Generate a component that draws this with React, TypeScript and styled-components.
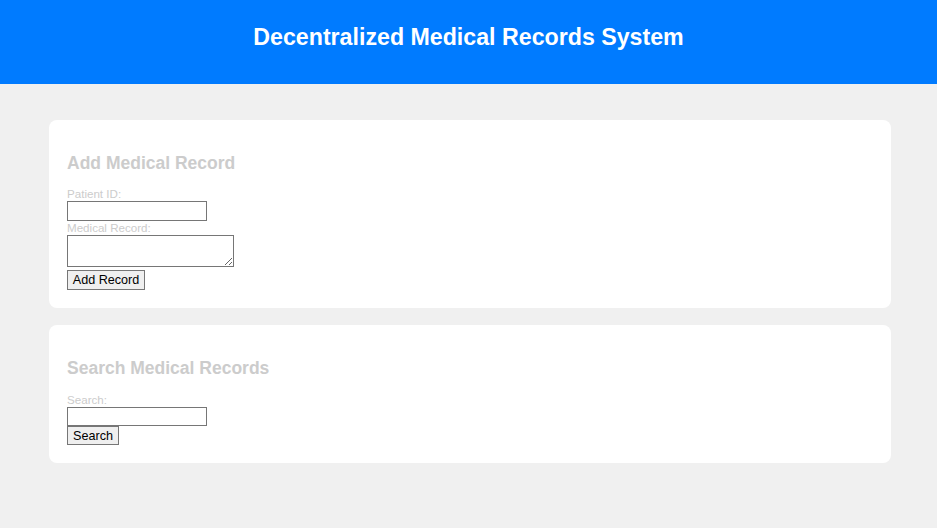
import React from "react";
import styled, { createGlobalStyle } from "styled-components";

const GlobalStyle = createGlobalStyle`
  html, body {
    margin: 0;
    padding: 0;
    background: #f0f0f0;
    font-family: "Liberation Sans", Arial, sans-serif;
  }
`;

const Header = styled.header`
  background: #007bff;
  height: 84px;
  box-sizing: border-box;
  padding-top: 23px;
`;

const Title = styled.h1`
  margin: 0;
  color: #ffffff;
  font-size: 23.2px;
  line-height: 28px;
  font-weight: bold;
  text-align: center;
`;

const Main = styled.main`
  display: flex;
  flex-direction: column;
  gap: 17px;
  padding: 36px 46px 0 49px;
`;

const Card = styled.section`
  background: #ffffff;
  border-radius: 8px;
  padding: 18px;
  display: flex;
  flex-direction: column;
  align-items: flex-start;
`;

const CardTitle = styled.h2<{ $after?: number }>`
  margin: 15px 0 ${(p) => p.$after ?? 13}px;
  color: #cccccc;
  font-size: 17.5px;
  line-height: 21px;
  font-weight: bold;
`;

const Label = styled.label`
  display: block;
  color: #cccccc;
  font-size: 11.6px;
  line-height: 14px;
`;

const TextInput = styled.input<{ $h?: number }>`
  box-sizing: border-box;
  width: 140px;
  height: ${(p) => p.$h ?? 20}px;
  margin: 0;
  padding: 1px 2px;
  border: 1px solid #767676;
  border-radius: 0;
  background: #fff;
  font-family: "Liberation Sans", Arial, sans-serif;
  font-size: 13px;
`;

const TextArea = styled.textarea`
  box-sizing: border-box;
  width: 167px;
  height: 32px;
  margin: 0 0 3px;
  padding: 2px;
  border: 1px solid #767676;
  border-radius: 0;
  background: #fff;
  font-family: "Liberation Mono", monospace;
  font-size: 13px;
  display: block;
`;

const Button = styled.button<{ $w: number; $h: number }>`
  box-sizing: border-box;
  width: ${(p) => p.$w}px;
  height: ${(p) => p.$h}px;
  margin: 0;
  padding: 0;
  border: 1px solid #767676;
  border-radius: 0;
  background: #efefef;
  color: #000;
  font-family: "Liberation Sans", Arial, sans-serif;
  font-size: 12.6px;
  line-height: 16px;
  white-space: nowrap;
  text-align: center;
  cursor: pointer;
`;

export default function App() {
  return (
    <>
      <GlobalStyle />
      <Header>
        <Title>Decentralized Medical Records System</Title>
      </Header>
      <Main>
        <Card>
          <CardTitle>Add Medical Record</CardTitle>
          <Label htmlFor="pid">Patient ID:</Label>
          <TextInput id="pid" type="text" />
          <Label htmlFor="rec">Medical Record:</Label>
          <TextArea id="rec" />
          <Button $w={78} $h={20}>Add Record</Button>
        </Card>
        <Card>
          <CardTitle $after={14}>Search Medical Records</CardTitle>
          <Label htmlFor="search">Search:</Label>
          <TextInput id="search" type="text" $h={19} />
          <Button $w={52} $h={19}>Search</Button>
        </Card>
      </Main>
    </>
  );
}
